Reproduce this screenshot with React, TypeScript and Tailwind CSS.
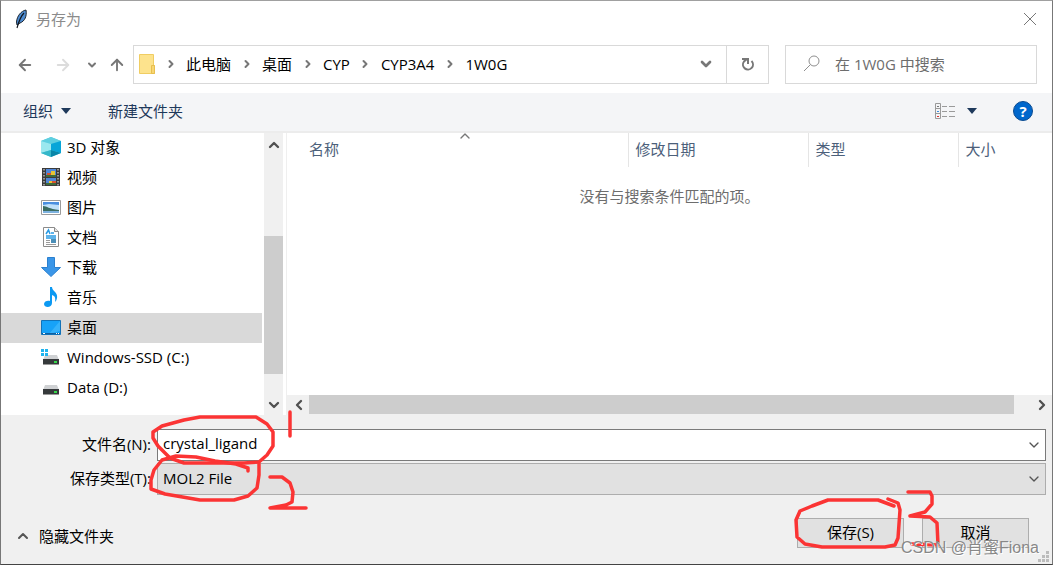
import React from 'react';
import { ArrowLeft, ArrowRight, ArrowUp, ChevronDown, ChevronLeft, ChevronRight, ChevronUp } from 'lucide-react';

const CubeIcon = () => (
  <svg width="20" height="20" viewBox="0 0 20 20">
    <path d="M0 4 10 0l10 4v12l-10 4L0 16z" fill="#4cc8de" />
    <path d="M0 4 10 0l10 4-10 3z" fill="#5fcfe0" />
    <path d="M10 7l10-3v12l-10-3z" fill="#08a5d8" />
    <path d="M0 4l10 3v6L0 16z" fill="#9be8ef" />
    <path d="M10 13l10 3-10 4z" fill="#0a86a8" />
    <path d="M10 13 0 16l10 4z" fill="#35b7c9" />
  </svg>
);

const VideoIcon = () => (
  <svg width="20" height="20" viewBox="0 0 20 20">
    <path d="M1 1h18v18H1z" fill="#3b3b3b" />
    <path d="M5 2h10v8H5zM5 11h10v7H5z" fill="#4f86d8" />
    <path d="M6 6h4v3H6zM11 14h4v3h-4z" fill="#d8542e" />
    <path d="M10 4h4v4h-4zM8 14h3v3H8z" fill="#e8c534" />
    <path d="M5 8h10v2H5zM5 16h10v2H5z" fill="#3e6b3b" />
    <path d="M3 2v17M17 2v17" stroke="#b5b5b5" strokeWidth="1.500" strokeDasharray="1.500 1.500" />
  </svg>
);

const PictureIcon = () => (
  <svg width="20" height="20" viewBox="0 0 20 20">
    <path d="M.5 3.500h19v14H.5z" fill="#fff" stroke="#9b9b9b" />
    <path d="M2 5h16v11H2z" fill="#bfe0fa" />
    <path d="M2 5h16v3L8 7 2 8z" fill="#4a8fe0" />
    <path d="M2 9c4 0 6 3 16 4v1H2z" fill="#3c6d62" />
    <path d="M2 14h16v2H2z" fill="#7db2df" />
  </svg>
);

const DocumentIcon = () => (
  <svg width="20" height="20" viewBox="0 0 20 20">
    <path d="M2.500.500h11l4 4v15h-15z" fill="#fff" stroke="#8b8b8b" />
    <path d="M13.500.500v4h4" fill="#e5e5e5" stroke="#8b8b8b" />
    <path d="M5 7l2.500-4L9 7M5 9h10M10 6h3M5 11h10" stroke="#2a9be4" strokeWidth="1.500" fill="none" />
    <path d="M5 13.500h4M5 15.500h4M5 17.500h10" stroke="#9b9b9b" />
    <path d="M10 12h5v4h-5z" fill="#4c8fb8" />
  </svg>
);

const DownloadIcon = () => (
  <svg width="20" height="20" viewBox="0 0 20 20">
    <path d="M6.500.500h7v10h6L10 19.500.500 10.500h6z" fill="#3a96e8" stroke="#2b80cf" />
  </svg>
);

const MusicIcon = () => (
  <svg width="20" height="20" viewBox="0 0 20 20">
    <path d="M9 0h2c0 4 6 5 5 11-.3 2-1 3-2 4 .6-4 .2-6-3-7v8c0 5-8 5-8 1 0-3 4-4 6-3z" fill="#0c99f2" />
  </svg>
);

const DesktopIcon = () => (
  <svg width="20" height="20" viewBox="0 0 20 20">
    <path d="M.5 3.500h19v14H.5z" fill="#17a2f8" stroke="#1272b8" />
    <path d="M19 4v10L8 17z" fill="#36b2fb" />
    <path d="M1 16.500h18" stroke="#0f5f9e" />
    <path d="M2 16.500h2M15 16.500h1M17 16.500h1" stroke="#fff" />
  </svg>
);

const DriveIcon = ({ system = false }: { system?: boolean }) => (
  <svg width="20" height="20" viewBox="0 0 20 20">
    <path d="M4 8h12l2 5H2z" fill="#cfd1d3" />
    <path d="M2 12h16v6H2z" fill="#36393b" />
    <path d="M2 17.500h16" stroke="#999" />
    <path d="M13 14h3v2h-3z" fill="#36d94a" />
    {system && <path d="M0 2h3v3H0zM4 2h3v3H4zM0 6h3v3H0zM4 6h3v3H4z" fill="#1fb4ef" />}
  </svg>
);

const places = [
  { label: '3D 对象', icon: <CubeIcon /> },
  { label: '视频', icon: <VideoIcon /> },
  { label: '图片', icon: <PictureIcon /> },
  { label: '文档', icon: <DocumentIcon /> },
  { label: '下载', icon: <DownloadIcon /> },
  { label: '音乐', icon: <MusicIcon /> },
  { label: '桌面', icon: <DesktopIcon />, selected: true },
  { label: 'Windows-SSD (C:)', icon: <DriveIcon system /> },
  { label: 'Data (D:)', icon: <DriveIcon /> },
];

const crumbs = ['此电脑', '桌面', 'CYP', 'CYP3A4', '1W0G'];

const TitleBar = () => (
  <header className="flex h-9 items-center pl-3 pr-3 text-[#8b8b8b]">
    <svg width="16" height="20" viewBox="0 0 16 20">
      <path d="M13 1C8 2 4 7 3.500 13l.5 3 3-2c5-2 7-7 6-13z" fill="#4d8bd0" stroke="#1c2530" />
      <path d="M11 4C7 8 6 12 4 19" stroke="#10151c" strokeWidth="1.200" fill="none" />
    </svg>
    <h1 className="ml-[7px] flex-1">另存为</h1>
    <button aria-label="关闭" className="flex w-5 justify-center">
      <svg width="14" height="14" viewBox="0 0 14 14" stroke="#777" fill="none">
        <path d="M1 1l12 12M13 1L1 13" />
      </svg>
    </button>
  </header>
);

const NavBar = () => (
  <nav className="flex h-14 items-start pt-2 pr-[15px]">
    <div className="flex h-10 w-[132px] items-center pl-[15px] text-[#777]">
      <button aria-label="后退"><ArrowLeft size={18} strokeWidth={2.5} /></button>
      <button aria-label="前进" className="ml-5 text-[#dcdcdc]"><ArrowRight size={18} strokeWidth={2.5} /></button>
      <button aria-label="最近" className="ml-[14px]"><ChevronDown size={12} strokeWidth={4} /></button>
      <button aria-label="上移" className="ml-[10px]"><ArrowUp size={18} strokeWidth={2.5} /></button>
    </div>
    <div className="flex h-[39px] flex-1 items-center border border-[#d9d9d9] pb-0.5 pl-[5px] text-black">
      <svg width="16" height="20" viewBox="0 0 16 20">
        <path d="M.5.500h14v11h1v8H.5z" fill="#fde38d" stroke="#f0cd62" />
        <path d="M12.500 11.500h3v8h-3z" fill="#f7d673" stroke="#e8bf4f" />
      </svg>
      {crumbs.map(crumb => (
        <React.Fragment key={crumb}>
          <span className="flex w-[31px] justify-center text-[#777]"><ChevronRight size={12} strokeWidth={4} /></span>
          <button>{crumb}</button>
        </React.Fragment>
      ))}
      <button aria-label="历史" className="ml-auto mr-3 text-[#777]"><ChevronDown size={16} strokeWidth={4} /></button>
      <button aria-label="刷新" className="-mb-0.5 flex h-[37px] w-[42px] items-center justify-center border-l border-[#d9d9d9] text-[#777]">
        <svg width="14" height="15" viewBox="0 0 14 15" fill="none" stroke="currentColor" strokeWidth="2">
          <path d="M10.500 4A5 5 0 1 1 3 4.500L6 2" />
          <path d="M1 2h6v5" />
        </svg>
      </button>
    </div>
    <label className="ml-4 flex h-[39px] w-[252px] items-center border border-[#d9d9d9] pb-0.5 pl-[17px]">
      <svg width="18" height="18" viewBox="0 0 18 18" fill="none" stroke="#8f8f8f">
        <circle cx="11" cy="6" r="5" />
        <path d="M7.500 9.500 1 16" />
      </svg>
      <input aria-label="搜索" placeholder="在 1W0G 中搜索" className="ml-[14px] min-w-0 flex-1 outline-none placeholder:text-[#6d6d6d]" />
    </label>
  </nav>
);

const Toolbar = () => (
  <div className="flex h-10 items-center border-b-2 border-[#ececec] bg-[#f4f5f7] pl-[22px] pr-[19px] pb-0.5 text-[#1e395b]">
    <button className="flex items-center gap-2">
      组织
      <svg width="10" height="6" viewBox="0 0 10 6"><path d="M0 0h10L5 6z" fill="#1e395b" /></svg>
    </button>
    <button className="ml-[37px]">新建文件夹</button>
    <button aria-label="更改视图" className="ml-auto flex items-center gap-3">
      <svg width="20" height="16" viewBox="0 0 20 16" fill="none" stroke="#9a9a9a">
        <path d="M.5.500h5v15h-5zM.5 5.500h5M.5 10.500h5" />
        <path d="M7 3.500h5M14 3.500h6M7 8.500h5M14 8.500h6M7 13.500h5M14 13.500h6" />
        <path d="M2 3.500h2" stroke="#777" />
        <path d="M2 8.500h2" stroke="#3b8ee0" />
        <path d="M2 13.500h2" stroke="#d33" />
      </svg>
      <svg width="10" height="6" viewBox="0 0 10 6"><path d="M0 0h10L5 6z" fill="#1e395b" /></svg>
    </button>
    <button aria-label="帮助" className="ml-9 flex h-5 w-5 items-center justify-center rounded-full border border-[#0b4b91] bg-[#0067cc] font-bold text-white">
      ?
    </button>
  </div>
);

const Sidebar = () => (
  <aside className="flex w-[286px] border-r border-[#efefef]">
    <ul className="flex-1 text-black">
      {places.map(place => (
        <li key={place.label}>
          <button className={`flex h-[30px] w-full items-center gap-[6px] pb-0.5 pl-10 ${place.selected ? 'bg-[#d9d9d9]' : ''}`}>
            {place.icon}
            {place.label}
          </button>
        </li>
      ))}
    </ul>
    <div className="ml-[2px] mr-[3px] flex w-[19px] flex-col items-center bg-[#f0f0f0] text-[#505050]">
      <ChevronUp className="mt-1" size={16} strokeWidth={3.5} />
      <div className="mt-[83px] h-[138px] w-full bg-[#cdcdcd]" />
      <ChevronDown className="mt-auto mb-[2px]" size={16} strokeWidth={3.5} />
    </div>
  </aside>
);

const FileList = () => (
  <section className="flex min-w-0 flex-1 flex-col">
    <table className="w-full table-fixed">
      <colgroup>
        <col className="w-[341px]" />
        <col className="w-[180px]" />
        <col className="w-[150px]" />
        <col />
      </colgroup>
      <thead>
        <tr className="h-[34px] text-left text-[#4c607a]">
          <th className="relative border-r border-[#e5e5e5] pb-0.5 pl-[22px] font-normal">
            <ChevronUp className="absolute top-[-5px] left-[170px] text-[#777]" size={16} strokeWidth={2} />
            名称
          </th>
          <th className="border-r border-[#e5e5e5] pb-0.5 pl-[7px] font-normal">修改日期</th>
          <th className="border-r border-[#e5e5e5] pb-0.5 pl-[7px] font-normal">类型</th>
          <th className="pb-0.5 pl-[7px] font-normal">大小</th>
        </tr>
      </thead>
      <tbody>
        <tr className="h-[58px] text-center text-[#6d6d6d]">
          <td colSpan={4}>没有与搜索条件匹配的项。</td>
        </tr>
      </tbody>
    </table>
    <div className="mt-auto flex h-5 items-center bg-[#f0f0f0] pr-[2px] text-[#505050]">
      <ChevronLeft className="ml-1" size={16} strokeWidth={3.5} />
      <div className="mr-5 ml-[2px] h-full flex-1 border-b border-[#f0f0f0] bg-[#cdcdcd]" />
      <ChevronRight size={16} strokeWidth={3.5} />
    </div>
  </section>
);

const Footer = () => (
  <footer className="bg-[#f0f0f0] pt-[14px] text-black">
    <div className="grid grid-cols-[150px_1fr] items-center gap-x-[6px] gap-y-[2px] pr-[6px]">
      <label htmlFor="file-name" className="pb-0.5 text-right">文件名(N):</label>
      <div className="relative">
        <input id="file-name" defaultValue="crystal_ligand" className="block h-8 w-full border border-[#7a7a7a] bg-white px-[5px] pb-1 outline-none" />
        <ChevronDown className="absolute top-2 right-1 text-[#555]" size={16} strokeWidth={2} />
      </div>
      <label htmlFor="file-type" className="pb-0.5 text-right">保存类型(T):</label>
      <div className="relative">
        <select id="file-type" className="block h-8 w-full appearance-none border border-[#adadad] bg-[#e1e1e1] px-[5px] pb-0.5">
          <option>MOL2 File</option>
        </select>
        <ChevronDown className="pointer-events-none absolute top-2 right-1 text-[#555]" size={16} strokeWidth={2} />
      </div>
    </div>
    <div className="flex items-center gap-[18px] pt-[23px] pr-[23px] pb-4 pl-[14px]">
      <button className="mr-auto flex items-center gap-2 pt-[6px]">
        <ChevronUp size={16} strokeWidth={3} className="text-[#555]" />
        隐藏文件夹
      </button>
      <button className="h-[30px] w-[107px] border border-[#adadad] bg-[#e1e1e1] pb-0.5">保存(S)</button>
      <button className="h-[30px] w-[107px] border border-[#adadad] bg-[#e1e1e1] pb-0.5">取消</button>
    </div>
  </footer>
);

// Pen marks that number the three steps
const PenMarks = () => (
  <svg className="pointer-events-none absolute -right-px -bottom-px" width="1053" height="565" viewBox="0 0 1053 565" fill="none" stroke="#fb3434" strokeWidth="3.500" strokeLinecap="round" strokeLinejoin="round">
    <path d="M184 420L200 417H256L267 424L273 432V446L267 455L259 462L244 463H184L170 458L158 446L153 438V432L162 426L184 420" />
    <path d="M290 412V436" />
    <path d="M248 471L248 468L236 464L215 461L196 457L176 456L162 460L154 470L151 480V489L165 494L200 500H234L248 496L257 488L259 475V464" />
    <path d="M270 477H282L290 483L293 492L292 502L286 505L270 508H306" />
    <path d="M888 499L898 503L900 510L898 538L895 545L885 547H822L805 544L797 537L796 520L800 511L812 506L828 500H878L894 506" />
    <path d="M908 492H930L932 496V504L925 512L910 516L930 517L937 523L938 545L912 544" />
  </svg>
);

export default function App() {
  return (
    <main className="relative flex min-h-screen flex-col border border-t-[#a0a0a0] border-r-[#777] border-b-[#444] border-l-[#777] bg-white font-['Open_Sans','Noto_Sans_CJK_SC',sans-serif] text-[15px] leading-5">
      <TitleBar />
      <NavBar />
      <Toolbar />
      <div className="flex flex-1">
        <Sidebar />
        <FileList />
      </div>
      <Footer />
      <PenMarks />
      <svg className="absolute right-[3px] bottom-[2px]" width="11" height="11" viewBox="0 0 11 11" fill="#bcbcbc">
        <path d="M8 0h3v3H8zM8 4h3v3H8zM8 8h3v3H8zM4 4h3v3H4zM4 8h3v3H4zM0 8h3v3H0z" />
      </svg>
      <p className="absolute right-[13px] bottom-[6px] font-['Liberation_Sans','Noto_Sans_CJK_SC',sans-serif] text-base leading-5 text-[#888] [text-shadow:1px_1px_0_#fff]">
        CSDN @肖蜜Fiona
      </p>
    </main>
  );
}
